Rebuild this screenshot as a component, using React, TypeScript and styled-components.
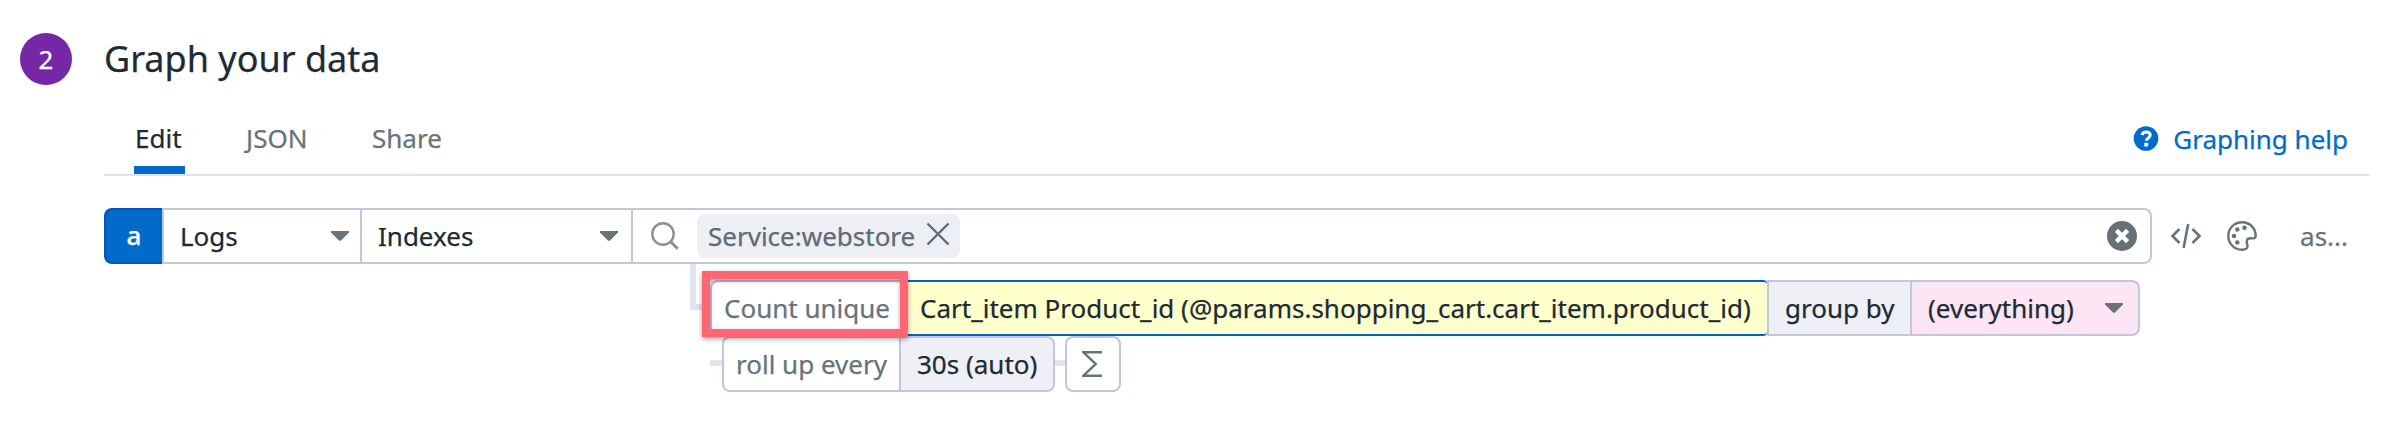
import React from "react";
import styled, { createGlobalStyle, css } from "styled-components";

const ink = "#1c2b34";
const muted = "#68737b";
const line = "#c0c6df";
const pale = "#e1e3ee";
const blue = "#006bc8";

const GlobalStyle = createGlobalStyle`
  * { box-sizing: border-box; }
  body {
    margin: 0;
    background: #fff;
    color: ${ink};
    font-family: "Noto Sans", sans-serif;
    font-size: 26px;
    line-height: 36px;
    -webkit-text-stroke: 0.25px currentColor;
  }
  svg { display: block; flex: none; }
`;

const Page = styled.main`
  height: 426px;
  padding: 33px 22px 0 20px;
  overflow: hidden;
`;

const Header = styled.header`
  display: flex;
  align-items: center;
  height: 52px;
`;

const StepBadge = styled.span`
  width: 52px;
  height: 52px;
  margin-right: 32px;
  border-radius: 50%;
  background: #7627a5;
  color: #fff;
  line-height: 52px;
  text-align: center;
`;

const Title = styled.h1`
  margin: 0;
  font-size: 36px;
  line-height: 52px;
  font-weight: 400;
`;

const Body = styled.section`
  margin-left: 84px;
`;

const TabBar = styled.nav`
  display: flex;
  height: 91px;
  padding: 35px 22px 0 30px;
  border-bottom: 2px solid ${pale};
`;

const Tab = styled.a<{ $active?: boolean; $gap: number }>`
  height: 54px;
  padding: 0 3px 0 1px;
  margin-right: ${(p) => p.$gap}px;
  color: ${(p) => (p.$active ? ink : muted)};
  border-bottom: 8px solid ${(p) => (p.$active ? blue : "transparent")};
  white-space: nowrap;
`;

const HelpLink = styled.a`
  display: flex;
  align-items: center;
  gap: 14px;
  height: 38px;
  margin-left: auto;
  color: ${blue};
`;

const QueryRow = styled.div`
  display: flex;
  align-items: center;
  height: 56px;
  margin-top: 32px;
`;

const QueryLetter = styled.span`
  width: 58px;
  height: 56px;
  border: 2px solid #0056bd;
  border-right: 0;
  border-radius: 8px 0 0 8px;
  background: ${blue};
  color: #fff;
  font-weight: 500;
  line-height: 51px;
  text-align: center;
`;

const cell = css`
  display: flex;
  align-items: center;
  height: 56px;
  border: 2px solid ${line};
  white-space: nowrap;
`;

const Select = styled.div<{ $width: number; $end?: number }>`
  ${cell}
  justify-content: space-between;
  width: ${(p) => p.$width}px;
  padding: 0 ${(p) => p.$end ?? 11}px 0 16px;
  border-right: 0;
`;

const SearchField = styled.div`
  ${cell}
  width: 1521px;
  padding: 0 13px 0 18px;
  border-radius: 0 8px 8px 0;
`;

const Chip = styled.span`
  display: flex;
  align-items: center;
  width: 263px;
  height: 44px;
  margin: 0 auto 0 18px;
  padding: 0 10px 0 11px;
  justify-content: space-between;
  border-radius: 8px;
  background: #eeeff5;
  color: #5f6b73;
`;

const RowActions = styled.div`
  display: flex;
  align-items: center;
  flex: 1;
  padding: 0 22px 0 17px;
  color: ${muted};
`;

const Alias = styled.span`
  margin-left: auto;
`;

const StepRow = styled.div<{ $indent: number }>`
  display: flex;
  align-items: center;
  height: 56px;
  padding-left: ${(p) => p.$indent}px;
`;

const FunctionRow = styled(StepRow)`
  height: 72px;
  padding-top: 16px;
`;

const Elbow = styled.span`
  align-self: flex-start;
  width: 20px;
  height: 46px;
  margin-top: -16px;
  border-left: 6px solid ${pale};
  border-bottom: 6px solid ${pale};
`;

const Dash = styled.span<{ $width: number }>`
  width: ${(p) => p.$width}px;
  height: 6px;
  margin-top: -2px;
  background: ${pale};
`;

const Part = styled.div<{ $width: number; $tone?: string; $round?: "left" | "right" | "all"; $open?: boolean; $pad?: number }>`
  ${cell}
  justify-content: space-between;
  width: ${(p) => p.$width}px;
  padding: 0 15px 0 ${(p) => p.$pad ?? 16}px;
  background: ${(p) => p.$tone ?? "#fff"};
  border-right-width: ${(p) => (p.$open ? 0 : 2)}px;
  border-radius: ${(p) =>
    p.$round === "left" ? "8px 0 0 8px" : p.$round === "right" ? "0 8px 8px 0" : p.$round === "all" ? "8px" : "0"};
`;

const Label = styled.span`
  color: ${muted};
`;

const MeasurePart = styled(Part)`
  border-color: #0061ce;
  border-width: 2px 0;
  border-radius: 0 4px 4px 0;
`;

const Highlighted = styled.div`
  position: relative;
`;

const HighlightFrame = styled.span`
  position: absolute;
  inset: -9px -7px -1px -8px;
  border: 8px solid #ff6673;
  box-shadow: 0 2px 5px rgba(0, 0, 0, 0.38), inset 0 2px 4px rgba(0, 0, 0, 0.38);
  z-index: 1;
`;

const Caret = () => (
  <svg width="18" height="10" viewBox="0 0 18 10">
    <path d="M0 0h18v1.6L10.3 9.3Q9 10.4 7.7 9.3L0 1.6Z" fill={muted} />
  </svg>
);

const HelpIcon = () => (
  <svg width="26" height="26" viewBox="0 0 26 26">
    <circle cx="13" cy="12.5" r="12.3" fill={blue} />
    <path d="M9 9.2C9.5 7.2 11 6 13.2 6c2.3 0 4 1.3 4 3.3 0 2.7-3.8 2.7-3.8 5.5" fill="none" stroke="#fff" strokeWidth="3" />
    <rect x="11.3" y="16.8" width="3.9" height="3.8" rx=".8" fill="#fff" />
  </svg>
);

const SearchIcon = () => (
  <svg width="28" height="28" viewBox="0 0 28 28" fill="none" stroke="#879196" strokeWidth="2.4">
    <circle cx="12" cy="12" r="10.7" />
    <path d="m19.7 19.7 7 7" strokeWidth="3" />
  </svg>
);

const CrossIcon = styled.svg`
  margin-top: -5px;
`;

const ClearIcon = () => (
  <svg width="30" height="30" viewBox="0 0 30 30">
    <circle cx="15" cy="15" r="15" fill="#667079" />
    <path d="m9.4 9.4 11.2 11.2M20.6 9.4 9.4 20.6" stroke="#fff" strokeWidth="4.4" />
  </svg>
);

const CodeIcon = () => (
  <svg width="34" height="26" viewBox="0 0 34 26" fill="none" stroke={muted} strokeWidth="2.6">
    <path d="m10.5 6-7 7 7 7M23.5 6l7 7-7 7M19.2 1l-4.6 24" />
  </svg>
);

const PaletteIcon = styled.svg`
  margin-left: 24px;
`;

const Sigma = () => (
  <svg width="21" height="28" viewBox="0 0 21 28" fill="none" stroke={muted} strokeWidth="2.4">
    <path d="M20 2.2H1.2L13.7 14 1.2 25.8H20" />
  </svg>
);

export default function App() {
  return (
    <Page>
      <GlobalStyle />
      <Header>
        <StepBadge>2</StepBadge>
        <Title>Graph your data</Title>
      </Header>
      <Body>
        <TabBar>
          <Tab $active $gap={60.5}>Edit</Tab>
          <Tab $gap={60.5}>JSON</Tab>
          <Tab $gap={0}>Share</Tab>
          <HelpLink>
            <HelpIcon />
            Graphing help
          </HelpLink>
        </TabBar>
        <QueryRow>
          <QueryLetter>a</QueryLetter>
          <Select $width={198}>Logs<Caret /></Select>
          <Select $width={271} $end={13}>Indexes<Caret /></Select>
          <SearchField>
            <SearchIcon />
            <Chip>
              Service:webstore
              <CrossIcon width="24" height="24" viewBox="0 0 24 24" stroke="#5f6b73" strokeWidth="2.4">
                <path d="m1.5 1.5 21 21M22.5 1.5l-21 21" />
              </CrossIcon>
            </Chip>
            <ClearIcon />
          </SearchField>
          <RowActions>
            <CodeIcon />
            <PaletteIcon width="30" height="30" viewBox="0 0 30 30" fill={muted}>
              <path
                d="M15 1.3C7.2 1.3 1.3 7.3 1.3 15S7.4 28.7 15 28.7c3.5 0 5.8-1.3 5.5-3.7-.3-2.4-1.2-3.2-.7-5.3.5-1.9 2.1-2.5 4-2.4 2.8.2 4.9-.2 4.9-2.3C28.7 7 22.6 1.3 15 1.3Z"
                fill="none"
                stroke={muted}
                strokeWidth="2.4"
              />
              <circle cx="17.5" cy="6.8" r="2.3" />
              <circle cx="10.3" cy="8.5" r="2.3" />
              <circle cx="7" cy="15" r="2.3" />
              <circle cx="10.3" cy="21.5" r="2.3" />
            </PaletteIcon>
            <Alias>as...</Alias>
          </RowActions>
        </QueryRow>
        <FunctionRow $indent={586}>
          <Elbow />
          <Highlighted>
            <Part $width={191} $round="left" $open $pad={12}><Label>Count unique</Label></Part>
            <HighlightFrame />
          </Highlighted>
          <MeasurePart $width={866} $tone="#ffffcc" $pad={19}>
            Cart_item Product_id (@params.shopping_cart.cart_item.product_id)
          </MeasurePart>
          <Part $width={143} $tone="#eff0f5" $open>group by</Part>
          <Part $width={230} $tone="#fde5f4" $round="right">(everything)<Caret /></Part>
        </FunctionRow>
        <StepRow $indent={606}>
          <Dash $width={12} />
          <Part $width={177} $round="left" $open $pad={12}><Label>roll up every</Label></Part>
          <Part $width={156} $tone="#eff0f5" $round="right">30s (auto)</Part>
          <Dash $width={10} />
          <Part $width={56} $round="all" $pad={15}><Sigma /></Part>
        </StepRow>
      </Body>
    </Page>
  );
}
